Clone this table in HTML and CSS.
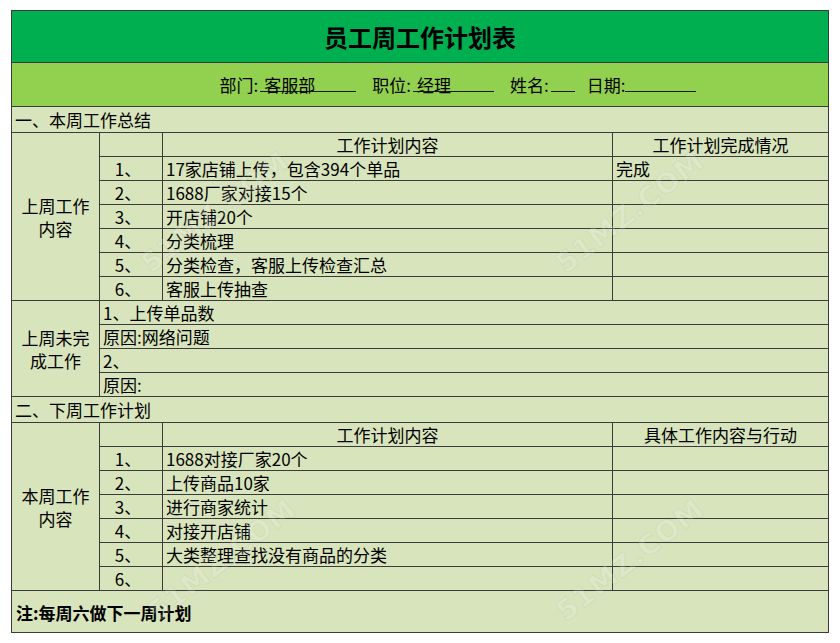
FILE: index.html
```html
<!DOCTYPE html>
<html lang="zh-CN">
<head>
<meta charset="utf-8">
<title>员工周工作计划表</title>
<link rel="stylesheet" href="styles.css">
</head>
<body>
<div class="page">
  <table class="sheet">
    <colgroup>
      <col class="c1"><col class="c2"><col class="c3"><col class="c4">
    </colgroup>
    <tr class="r-title"><td colspan="4" class="title">员工周工作计划表</td></tr>
    <tr class="r-info">
      <td colspan="4" class="info">
        <div class="info-line">
          <span>部门:</span><span class="blank w1">客服部</span>
          <span class="lbl">职位:</span><span class="blank w2">经理</span>
          <span class="lbl">姓名:</span><span class="blank w3"></span>
          <span class="lbl lbl-s">日期:</span><span class="blank w4"></span>
        </div>
      </td>
    </tr>
    <tr class="r-sec"><td colspan="4" class="sec">一、本周工作总结</td></tr>
    <tr class="r">
      <td rowspan="7" class="side">上周工作<br>内容</td>
      <td></td>
      <td class="ctr">工作计划内容</td>
      <td class="ctr">工作计划完成情况</td>
    </tr>
    <tr class="r"><td class="num">1、</td><td class="txt">17家店铺上传，包含394个单品</td><td class="txt">完成</td></tr>
    <tr class="r"><td class="num">2、</td><td class="txt">1688厂家对接15个</td><td></td></tr>
    <tr class="r"><td class="num">3、</td><td class="txt">开店铺20个</td><td></td></tr>
    <tr class="r"><td class="num">4、</td><td class="txt">分类梳理</td><td></td></tr>
    <tr class="r"><td class="num">5、</td><td class="txt">分类检查，客服上传检查汇总</td><td></td></tr>
    <tr class="r"><td class="num">6、</td><td class="txt">客服上传抽查</td><td></td></tr>
    <tr class="r">
      <td rowspan="4" class="side">上周未完<br>成工作</td>
      <td colspan="3" class="txt">1、上传单品数</td>
    </tr>
    <tr class="r"><td colspan="3" class="txt">原因:网络问题</td></tr>
    <tr class="r"><td colspan="3" class="txt">2、</td></tr>
    <tr class="r"><td colspan="3" class="txt">原因:</td></tr>
    <tr class="r-sec2"><td colspan="4" class="sec">二、下周工作计划</td></tr>
    <tr class="r">
      <td rowspan="7" class="side">本周工作<br>内容</td>
      <td></td>
      <td class="ctr">工作计划内容</td>
      <td class="ctr">具体工作内容与行动</td>
    </tr>
    <tr class="r"><td class="num">1、</td><td class="txt">1688对接厂家20个</td><td></td></tr>
    <tr class="r"><td class="num">2、</td><td class="txt">上传商品10家</td><td></td></tr>
    <tr class="r"><td class="num">3、</td><td class="txt">进行商家统计</td><td></td></tr>
    <tr class="r"><td class="num">4、</td><td class="txt">对接开店铺</td><td></td></tr>
    <tr class="r"><td class="num">5、</td><td class="txt">大类整理查找没有商品的分类</td><td></td></tr>
    <tr class="r"><td class="num">6、</td><td class="txt"></td><td></td></tr>
    <tr class="r-note"><td colspan="4" class="note">注:每周六做下一周计划</td></tr>
  </table>
  <div class="wm wm1">51MZ.COM</div>
  <div class="wm wm2">51MZ.COM</div>
  <div class="wm wm3">51MZ.COM</div>
  <div class="wm wm4">51MZ.COM</div>
</div>
</body>
</html>
```
FILE: styles.css
```css
html, body {
  margin: 0;
  padding: 0;
  background: #ffffff;
}
body {
  font-family: "Noto Sans CJK SC", "Noto Sans", sans-serif;
  color: #000;
}
.page {
  position: relative;
  width: 840px;
  height: 643px;
  overflow: hidden;
  padding: 10px 0 0 11px;
  box-sizing: border-box;
}
.sheet {
  border-collapse: collapse;
  table-layout: fixed;
  width: 817px;
  font-size: 17px;
  background: #d8e4bc;
}
.c1 { width: 88px; }
.c2 { width: 63px; }
.c3 { width: 450px; }
.c4 { width: 216px; }
.sheet td {
  border: 1px solid #3b3b3b;
  padding: 0;
  line-height: 22px;
  white-space: nowrap;
  overflow: hidden;
}
.r-title td { height: 51px; }
.r-info td { height: 43px; }
.r-sec td { height: 25px; }
.r-sec2 td { height: 25px; }
.r td { height: 23px; }
.r-note td { height: 39px; }

.title {
  background: #00af50;
  text-align: center;
  font-weight: 700;
  font-size: 24px;
}
.info {
  background: #92d050;
}
.info-line {
  display: flex;
  justify-content: center;
  align-items: baseline;
  padding-left: 76px;
  padding-top: 1px;
}
.blank {
  display: inline-block;
  border-bottom: 1px solid #1a1a1a;
  line-height: 15px;
  height: 15px;
  padding-left: 4px;
  box-sizing: border-box;
}
.w1 { width: 96px; margin-left: 2px; }
.w2 { width: 81px; margin-left: 2px; }
.w3 { width: 24px; margin-left: 2px; }
.w4 { width: 71px; margin-left: 0; }
.lbl { margin-left: 16px; }
.lbl-s { margin-left: 12px; }

.sec {
  padding-left: 3px !important;
  background: #d8e4bc;
}
.side {
  text-align: center;
  line-height: 23px !important;
  background: #d8e4bc;
}
.ctr { text-align: center; }
.num { text-align: center; padding-right: 6px !important; }
.txt { padding-left: 3px !important; }
.note {
  font-weight: 700;
  padding-left: 4px !important;
  padding-top: 2px !important;
}

.wm {
  position: absolute;
  font-family: "DejaVu Sans", sans-serif;
  font-weight: 700;
  font-size: 28px;
  letter-spacing: 1px;
  color: rgba(255, 255, 255, 0.18);
  -webkit-text-stroke: 1px rgba(175, 185, 165, 0.22);
  transform: translate(-50%, -50%) rotate(-38deg);
  pointer-events: none;
  white-space: nowrap;
}
.wm1 { left: 215px; top: 212px; }
.wm2 { left: 630px; top: 212px; }
.wm3 { left: 222px; top: 560px; }
.wm4 { left: 630px; top: 560px; }
```
